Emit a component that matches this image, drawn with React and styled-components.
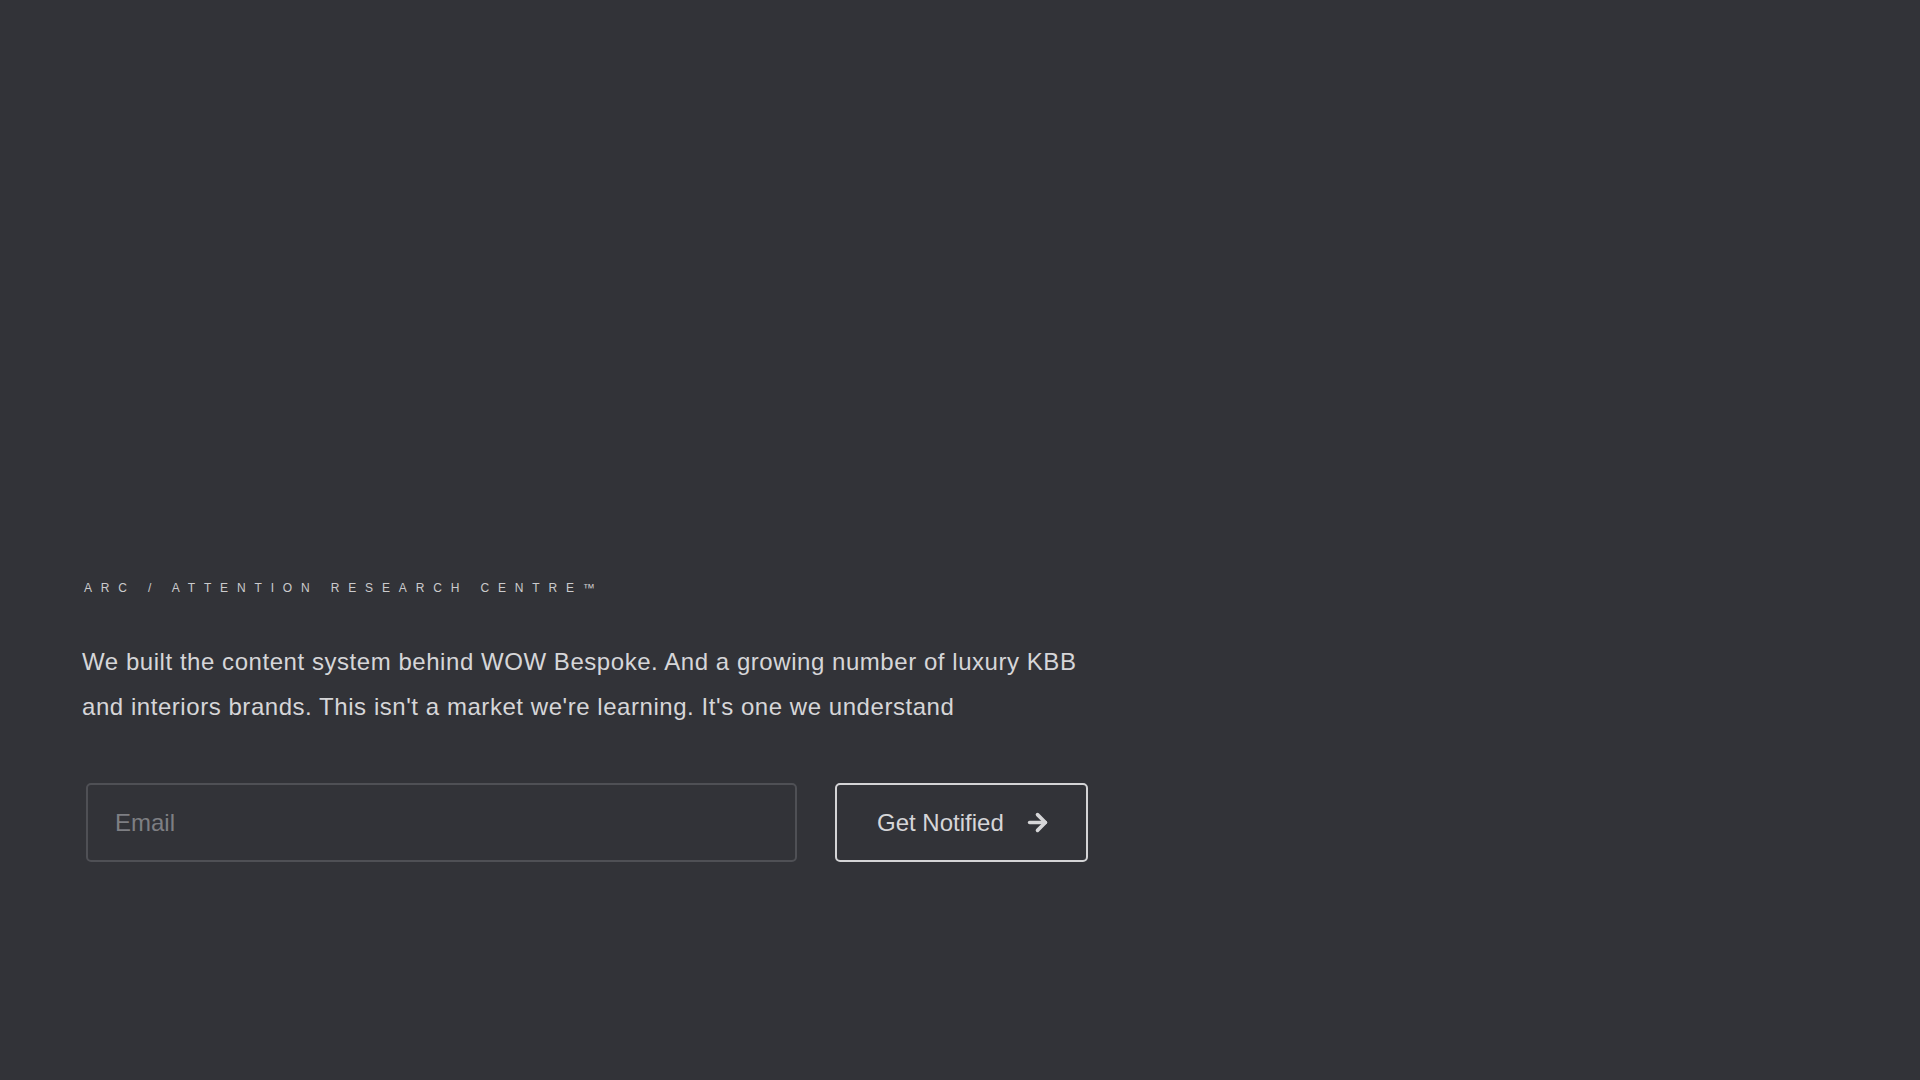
import React from "react";
import styled, { createGlobalStyle } from "styled-components";
import { ArrowRight } from "lucide-react";

// full-height dark page, content sits in the lower-left block

const GlobalStyle = createGlobalStyle`
  html, body {
    margin: 0;
    padding: 0;
    background: #323338;
  }
  * {
    box-sizing: border-box;
  }
`;

const Page = styled.main`
  min-height: 100vh;
  width: 100%;
  background: #323338;
  padding: 580px 0 0 82px;
  font-family: "Liberation Sans", Arial, sans-serif;
`;

const Content = styled.section`
  display: flex;
  flex-direction: column;
  width: 1010px;
`;

const Eyebrow = styled.div`
  font-size: 12px;
  line-height: 16px;
  letter-spacing: 8.85px;
  color: #cbcbcd;
  text-transform: uppercase;
  padding-left: 2px;
`;

const Lead = styled.p`
  margin: 43px 0 0;
  font-size: 24px;
  line-height: 45px;
  letter-spacing: 0.55px;
  color: #d6d6d8;
  max-width: 1010px;
`;

const Form = styled.form`
  display: flex;
  align-items: stretch;
  gap: 38px;
  margin-top: 54px;
  padding-left: 4px;
`;

const EmailInput = styled.input`
  width: 711px;
  height: 79px;
  padding: 0 27px;
  background: transparent;
  border: 2px solid #4f5055;
  border-radius: 5px;
  color: #d6d6d8;
  font-family: inherit;
  font-size: 24px;
  outline: none;

  &::placeholder {
    color: #7e7f83;
  }
`;

const NotifyButton = styled.button`
  display: flex;
  align-items: center;
  gap: 20px;
  height: 79px;
  padding: 0 35px 0 40px;
  background: transparent;
  border: 2px solid #d4d4d6;
  border-radius: 5px;
  color: #d6d6d8;
  font-family: inherit;
  font-size: 24px;
  cursor: pointer;
`;

function App() {
  return (
    <>
      <GlobalStyle />
      <Page>
        <Content>
          <Eyebrow>ARC / Attention Research Centre™</Eyebrow>
          <Lead>
            We built the content system behind WOW Bespoke. And a growing
            number of luxury KBB and interiors brands. This isn't a market
            we're learning. It's one we understand
          </Lead>
          <Form onSubmit={(e) => e.preventDefault()}>
            <EmailInput type="email" placeholder="Email" />
            <NotifyButton type="submit">
              Get Notified
              <ArrowRight size={27} strokeWidth={3.2} />
            </NotifyButton>
          </Form>
        </Content>
      </Page>
    </>
  );
}

export default App;
